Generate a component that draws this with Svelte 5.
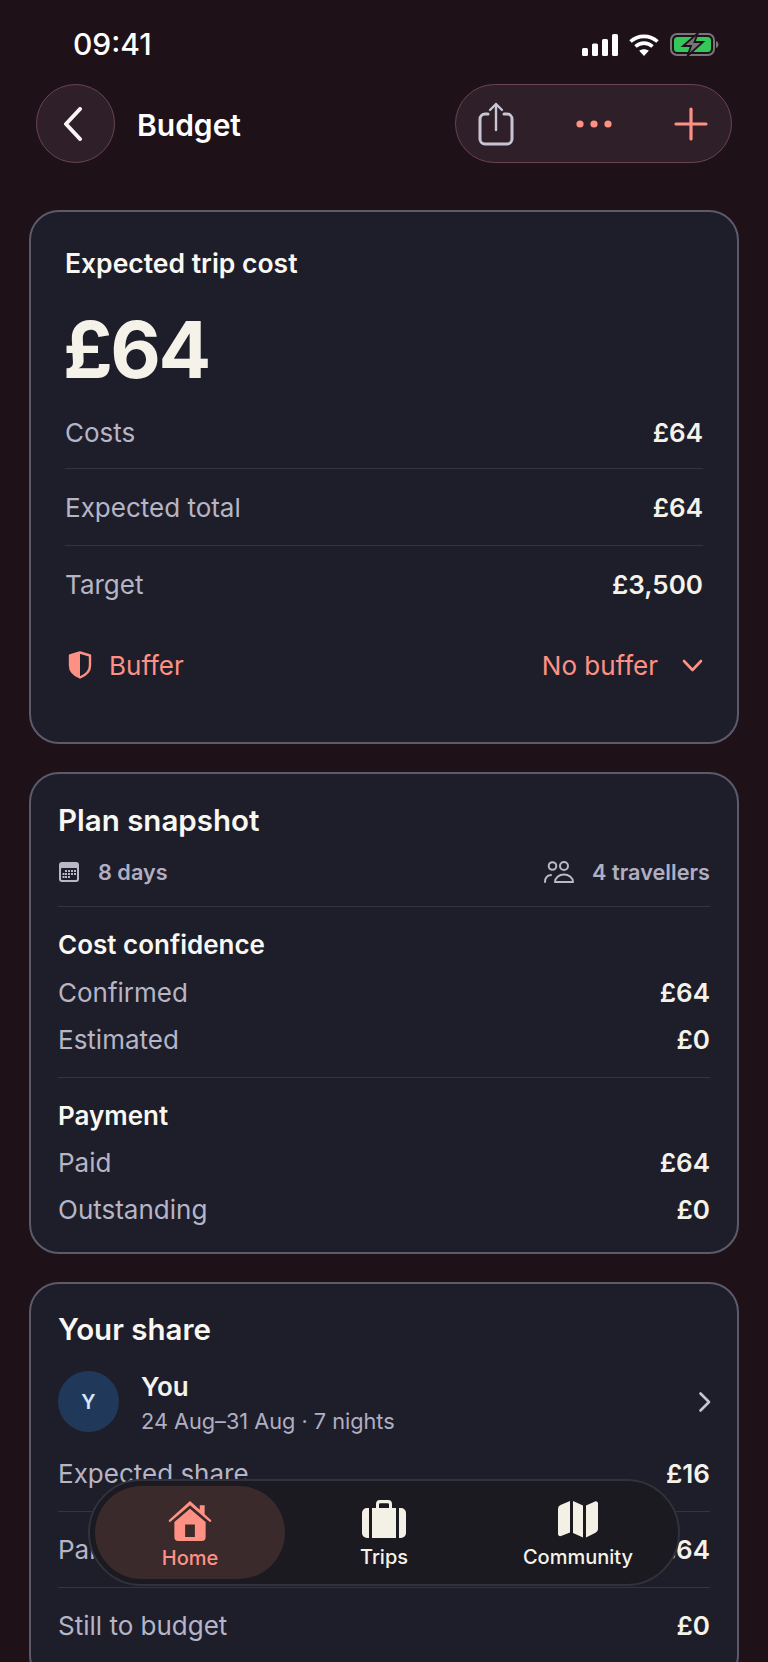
<script>
  const cost = [["Costs","£64"],["Expected total","£64"],["Target","£3,500"]];
  const conf = [["Confirmed","£64"],["Estimated","£0"]];
  const pay = [["Paid","£64"],["Outstanding","£0"]];
  const share = [["Expected share","£16"],["Paid","£64"],["Still to budget","£0"]];
</script>

<div class="phone">
  <div class="status">
    <span class="time">09:41</span>
    <div class="status-icons">
      <svg width="36" height="22" viewBox="0 0 36 22" fill="#fff"><rect x="0" y="14" width="6" height="8" rx="1.5"/><rect x="10" y="9.5" width="6" height="12.5" rx="1.5"/><rect x="20" y="5" width="6" height="17" rx="1.5"/><rect x="30" y="0" width="6" height="22" rx="1.5"/></svg>
      <svg width="30" height="22" viewBox="0 0 30 22" fill="none" stroke="#fff" stroke-width="3.6"><path d="M1.5 7.5C9 .6 21 .6 28.500 7.500"/><path d="M6.500 12.500C11.500 8 18.500 8 23.500 12.500"/><path d="M15 22l-4.800-5.300c2.800-2 6.800-2 9.600 0z" fill="#fff" stroke="none"/></svg>
      <svg width="49" height="23" viewBox="0 0 49 23"><rect x="1" y="1" width="43" height="21" rx="6" fill="none" stroke="#77757a" stroke-width="2"/><rect x="4" y="4" width="37" height="15" rx="3.500" fill="#34c759"/><path d="M46 8v7c1.500-.5 2.500-2 2.500-3.500S47.500 8.500 46 8z" fill="#77757a"/><path d="M28 0L13 13h8l-3.500 10L33 9h-8.500z" fill="#77757a" stroke="#1e1218" stroke-width="1.800"/></svg>
    </div>
  </div>

  <header class="bar">
    <button class="round" aria-label="Back">
      <svg width="20" height="34" viewBox="0 0 20 34" fill="none" stroke="#fbf4f4" stroke-width="4" stroke-linecap="round" stroke-linejoin="round"><path d="M17 2L3 17l14 15"/></svg>
    </button>
    <h1>Budget</h1>
    <div class="actions">
      <svg width="36" height="44" viewBox="0 0 36 44" fill="none" stroke="#c8c6d4" stroke-linecap="round" stroke-linejoin="round"><path d="M10 12H7a5 5 0 0 0-5 5v20a5 5 0 0 0 5 5h22a5 5 0 0 0 5-5V17a5 5 0 0 0-5-5h-3" stroke-width="3"/><path d="M18 28V2M12 8l6-6 6 6" stroke-width="2.400"/></svg>
      <svg width="36" height="8" viewBox="0 0 36 8" fill="#ff9184"><circle cx="4" cy="4" r="3.600"/><circle cx="18" cy="4" r="3.600"/><circle cx="32" cy="4" r="3.600"/></svg>
      <svg width="34" height="34" viewBox="0 0 34 34" fill="none" stroke="#ff9184" stroke-width="3.200" stroke-linecap="round"><path d="M17 2v30M2 17h30"/></svg>
    </div>
  </header>

  <section class="card first">
    <div class="eyebrow">Expected trip cost</div>
    <div class="big">£64</div>
    {#each cost as [k, v], i}
      <div class="row tall" class:sep={i > 0}><span class="k">{k}</span><span class="v">{v}</span></div>
    {/each}
    <div class="buffer">
      <div class="buf-l">
        <svg width="24" height="28" viewBox="0 0 24 28"><path d="M12 1.500L2 4.500v10c0 5.500 4 9.500 10 12 6-2.500 10-6.500 10-12v-10z" fill="none" stroke="#ff9184" stroke-width="2.400" stroke-linejoin="round"/><path d="M12 1.500L2 4.500v10c0 5.500 4 9.500 10 12z" fill="#ff9184"/></svg>
        <span>Buffer</span>
      </div>
      <div class="buf-r">
        <span>No buffer</span>
        <svg width="21" height="13" viewBox="0 0 21 13" fill="none" stroke="#ff9184" stroke-width="2.600" stroke-linecap="round" stroke-linejoin="round"><path d="M2 2l8.500 9L19 2"/></svg>
      </div>
    </div>
  </section>

  <section class="card second">
    <h2>Plan snapshot</h2>
    <div class="meta">
      <div class="meta-item">
        <svg width="22" height="22" viewBox="0 0 22 22"><rect x="1" y="1" width="20" height="20" rx="3" fill="#b9b8c9"/><rect x="3" y="7" width="16" height="12" rx="1" fill="#1e1e2a"/><g fill="#b9b8c9"><rect x="7" y="9" width="2" height="2"/><rect x="10" y="9" width="2" height="2"/><rect x="13" y="9" width="2" height="2"/><rect x="16" y="9" width="2" height="2"/><rect x="4.500" y="12" width="2" height="2"/><rect x="7" y="12" width="2" height="2"/><rect x="10" y="12" width="2" height="2"/><rect x="13" y="12" width="2" height="2"/><rect x="16" y="12" width="2" height="2"/><rect x="4.500" y="15" width="2" height="2"/><rect x="7" y="15" width="2" height="2"/><rect x="10" y="15" width="2" height="2"/></g></svg>
        <span>8 days</span>
      </div>
      <div class="meta-item">
        <svg width="30" height="22" viewBox="0 0 30 22" fill="none" stroke="#b9b8c9" stroke-width="2"><circle cx="8.500" cy="5" r="3.800"/><circle cx="20" cy="5" r="4"/><path d="M1 21c0-3.500 2-6.500 6-7M11 21c0-4 4-7.500 9-7.500S29 17 29 21z" stroke-linejoin="round" stroke-linecap="round"/></svg>
        <span>4 travellers</span>
      </div>
    </div>
    <div class="group g1">
      <h3>Cost confidence</h3>
      {#each conf as [k, v]}
        <div class="row short"><span class="k">{k}</span><span class="v">{v}</span></div>
      {/each}
    </div>
    <div class="group g2">
      <h3>Payment</h3>
      {#each pay as [k, v]}
        <div class="row short"><span class="k">{k}</span><span class="v">{v}</span></div>
      {/each}
    </div>
  </section>

  <section class="card third">
    <h2>Your share</h2>
    <div class="person">
      <div class="avatar">Y</div>
      <div class="who">
        <div class="name">You</div>
        <div class="dates">24 Aug–31 Aug · 7 nights</div>
      </div>
      <svg class="go" width="14" height="22" viewBox="0 0 14 22" fill="none" stroke="#c8c6d4" stroke-width="2.600" stroke-linecap="round" stroke-linejoin="round"><path d="M2.500 2.500L11 11l-8.500 8.500"/></svg>
    </div>
    {#each share as [k, v], i}
      <div class="row tall" class:sep={i > 0}><span class="k">{k}</span><span class="v">{v}</span></div>
    {/each}
  </section>

  <nav class="tabs">
    <div class="tab active">
      <svg width="46" height="41" viewBox="0 0 46 42" fill="#ff9184"><path d="M23 1L1.500 20.500c-1 1 .3 2.700 1.500 1.900L23 5.500l20 16.900c1.200.8 2.500-.9 1.500-1.900L38 14.500V5.500h-5v4.500z"/><path fill-rule="evenodd" d="M23 9L7 22.500V38a4 4 0 0 0 4 4h24a4 4 0 0 0 4-4V22.500zM18 25h10v13H18z"/></svg>
      <span>Home</span>
    </div>
    <div class="tab">
      <svg width="44" height="38" viewBox="0 0 44 38" fill="#f3f0e6"><path fill-rule="evenodd" d="M10 8V38h24V8h-4V4a4 4 0 0 0-4-4H18a4 4 0 0 0-4 4v4zM17 4.500a1.200 1.200 0 0 1 1.200-1.200h7.600a1.200 1.200 0 0 1 1.200 1.200V8H17z"/><path d="M7 8H5a5 5 0 0 0-5 5v20a5 5 0 0 0 5 5h2zM37 8h2a5 5 0 0 1 5 5v20a5 5 0 0 1-5 5h-2z"/></svg>
      <span>Trips</span>
    </div>
    <div class="tab">
      <svg width="40" height="38" viewBox="0 0 40 38" fill="#f3f0e6"><path d="M12 1L2.500 5A4 4 0 0 0 0 8.700V34c0 1.500 1.500 2.500 3 2l9-3.500zM15 1l10 4.500v32L15 33zM28 5.500L37 1.500c1.500-.6 3 .5 3 2V29a4 4 0 0 1-2.500 3.700L28 37.500z"/></svg>
      <span>Community</span>
    </div>
  </nav>
</div>

<style>
  :global(body) {
    margin: 0;
    background: #1e1218;
  }
  .phone {
    position: relative;
    width: 768px;
    height: 1662px;
    overflow: hidden;
    background: #1e1218;
    color: #f5f2ea;
    font-family: Inter, "Liberation Sans", sans-serif;
    box-sizing: border-box;
    padding: 0 29px;
  }
  .status {
    height: 84px;
    display: flex;
    justify-content: space-between;
    align-items: flex-start;
    padding: 26px 20px 0 44px;
    box-sizing: border-box;
  }
  .time {
    font-size: 30px;
    line-height: 36px;
    font-weight: 500;
    color: #fff;
  }
  .status-icons {
    display: flex;
    align-items: center;
    gap: 11px;
    margin-top: 7px;
  }
  .bar {
    display: flex;
    align-items: center;
    height: 79px;
    margin: 0 7px 47px 7px;
  }
  .round {
    width: 79px;
    height: 79px;
    border-radius: 50%;
    background: #2e1f28;
    border: 1.500px solid #6a4455;
    padding: 0 5px 0 0;
    display: flex;
    align-items: center;
    justify-content: center;
    box-sizing: border-box;
  }
  h1 {
    margin: 0 0 0 22px;
    font-size: 30px;
    line-height: 40px;
    font-weight: 600;
    color: #fff;
    flex: 1;
    padding-top: 2px;
  }
  .actions {
    width: 277px;
    height: 79px;
    box-sizing: border-box;
    border-radius: 40px;
    background: #2e1f28;
    border: 1.500px solid #6a4455;
    display: flex;
    align-items: center;
    justify-content: space-between;
    padding: 0 23px 0 22px;
  }
  .card {
    background: #1e1e2a;
    border: 2px solid #5c5b6c;
    border-radius: 30px;
    padding: 28px 27px 20px;
    margin-bottom: 28px;
    box-sizing: border-box;
  }
  .first {
    padding: 36px 34px 0;
    height: 534px;
  }
  .second {
    padding-bottom: 19px;
  }
  .third {
    padding-top: 27px;
  }
  .eyebrow {
    font-size: 26.500px;
    line-height: 30px;
    font-weight: 600;
    color: #f9f7f2;
  }
  .big {
    font-size: 78px;
    line-height: 93px;
    font-weight: 700;
    letter-spacing: -2.500px;
    margin: 25px 0 0 -2px;
    color: #f5f2ea;
  }
  .row {
    display: flex;
    justify-content: space-between;
    align-items: center;
    font-size: 26px;
  }
  .tall {
    height: 76px;
  }
  .first .tall:nth-of-type(3) {
    height: 72px;
  }
  .third .tall {
    height: 75px;
  }
  .short {
    height: 47px;
  }
  .sep {
    border-top: 1px solid #34343f;
  }
  .k {
    color: #b6b5c6;
  }
  .v {
    font-weight: 600;
    color: #f5f2ea;
  }
  .buffer {
    display: flex;
    justify-content: space-between;
    align-items: center;
    height: 76px;
    margin-top: 5px;
    font-size: 26px;
    color: #ff9184;
  }
  .buf-l, .buf-r {
    display: flex;
    align-items: center;
  }
  .buf-l { gap: 17px; margin-left: 3px; }
  .buf-r { gap: 24px; }
  h2 {
    margin: 0;
    font-size: 29.500px;
    line-height: 36px;
    font-weight: 600;
    color: #f9f7f2;
  }
  .meta {
    display: flex;
    justify-content: space-between;
    align-items: center;
    height: 52px;
    margin-top: 8px;
    padding-bottom: 0;
    font-size: 21.700px;
    font-weight: 600;
    color: #b0afc2;
  }
  .meta-item {
    display: flex;
    align-items: center;
    gap: 18px;
  }
  .group {
    border-top: 1px solid #34343f;
  }
  .g1 {
    margin-top: 8px;
    padding: 21px 0 14px;
  }
  .g2 {
    padding: 21px 0 0;
  }
  h3 {
    margin: 0 0 6px;
    font-size: 26px;
    line-height: 34px;
    font-weight: 600;
    color: #f9f7f2;
  }
  .g1 h3 {
    margin-bottom: 7px;
  }
  .person {
    display: flex;
    align-items: center;
    gap: 22px;
    margin-top: 20px;
  }
  .go {
    margin-right: -2px;
  }
  .avatar {
    width: 61px;
    height: 61px;
    border-radius: 50%;
    background: #20395a;
    color: #d8e6fb;
    display: flex;
    align-items: center;
    justify-content: center;
    font-size: 20px;
    font-weight: 600;
    flex: none;
  }
  .who {
    flex: 1;
    margin-top: 4px;
  }
  .name {
    font-size: 26px;
    line-height: 32px;
    font-weight: 600;
  }
  .dates {
    font-size: 21.700px;
    line-height: 30px;
    margin-top: 3px;
    color: #b0afc2;
  }
  .tabs {
    position: absolute;
    left: 88px;
    top: 1479px;
    width: 592px;
    height: 107px;
    box-sizing: border-box;
    border-radius: 54px;
    background: #1a1a20;
    border: 2px solid #32323e;
    display: flex;
    align-items: center;
    padding: 0 3px 0 5px;
  }
  .tab {
    width: 190px;
    height: 93px;
    border-radius: 47px;
    display: flex;
    flex-direction: column;
    align-items: center;
    justify-content: flex-start;
    gap: 7px;
    padding-top: 14px;
    box-sizing: border-box;
    font-size: 20px;
    font-weight: 500;
    color: #f5f2ea;
  }
  .tab + .tab {
    flex: 1;
  }
  .active {
    background: #3a2a2b;
    color: #ff9184;
    margin-right: 2px;
    gap: 5px;
  }
</style>
